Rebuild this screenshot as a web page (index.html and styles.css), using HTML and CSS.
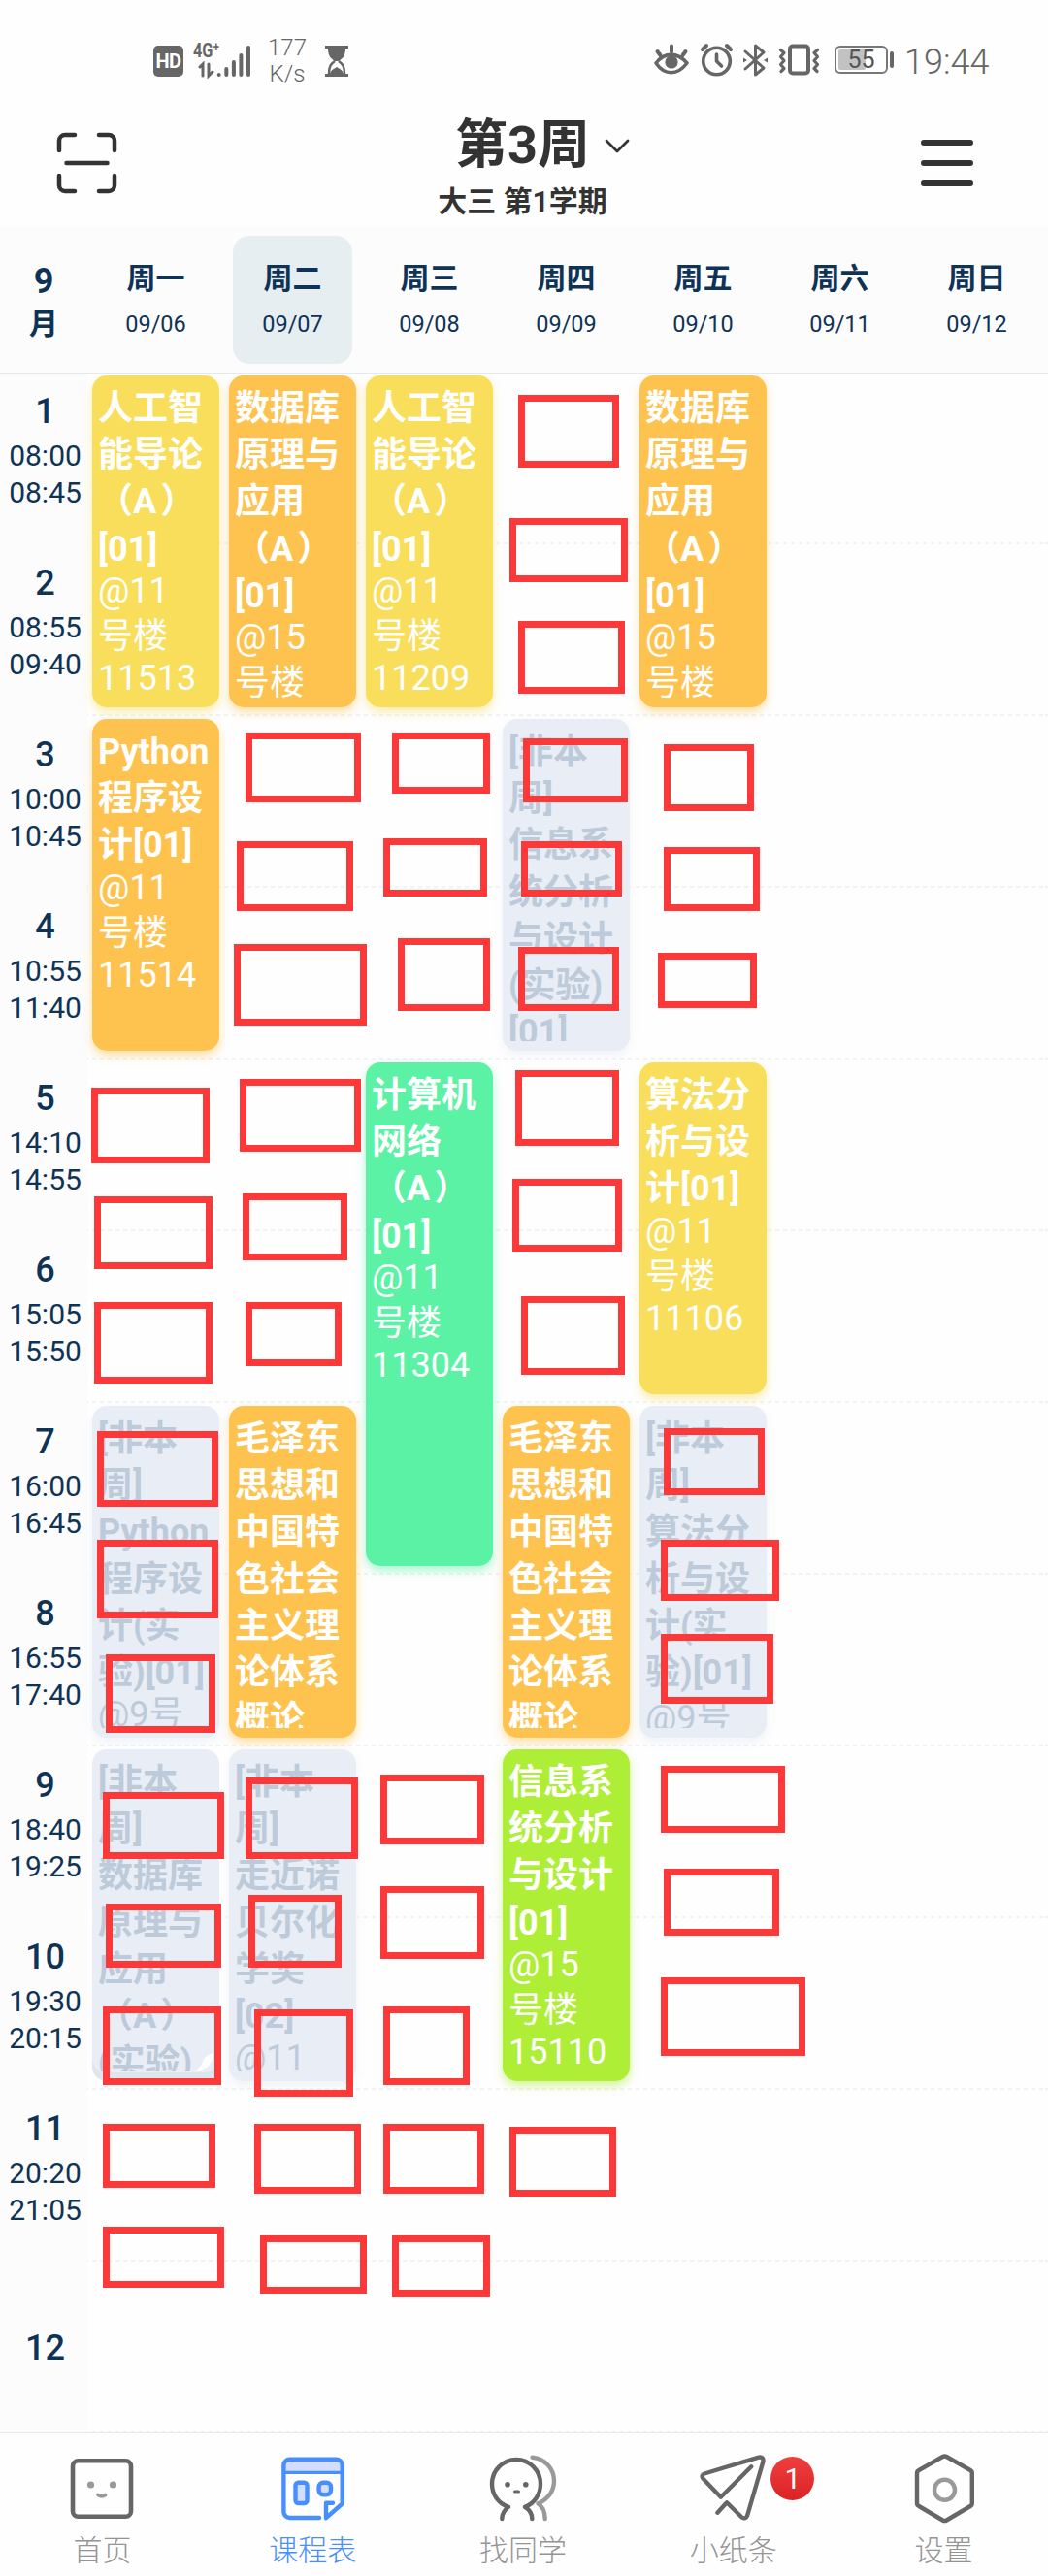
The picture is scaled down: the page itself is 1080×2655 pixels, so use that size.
FILE: index.html
```html
<!DOCTYPE html>
<html lang="zh-CN">
<head>
<meta charset="utf-8">
<title>课程表</title>
<link rel="stylesheet" href="styles.css">
</head>
<body>
<div class="status">
  <span class="hd">HD</span>
  <svg class="signal" width="62" height="40" viewBox="0 0 62 40">
    <text x="1" y="18" class="net" textLength="27" lengthAdjust="spacingAndGlyphs">4G⁺</text>
    <g stroke="#666" stroke-width="4" stroke-linecap="round" fill="none">
      <path d="M27.7 36v0M35.3 30v6M42.9 23v13M50.4 16v20M58 8v28"/>
      <path stroke-width="3" d="M8 28l3-3v12M17 25v12l4-4"/>
    </g>
  </svg>
  <span class="rate">177<br>K/s</span>
  <svg class="glass" width="26" height="34" viewBox="0 0 26 34">
    <g fill="#666"><path d="M1 1h24v3H1zM1 30h24v3H1zM4 4h18c0 8-3 10-7 13h-4C7 14 4 12 4 4z"/><path d="M6 30c1-4 4-5 7-7 3 2 6 3 7 7z"/></g>
    <path d="M11 17c-4 3-6 5-6 13M15 17c4 3 6 5 6 13" fill="none" stroke="#666" stroke-width="2.4"/>
  </svg>
  <svg class="sys" width="173" height="36" viewBox="0 0 173 36">
    <g fill="none" stroke="#666" stroke-width="4" stroke-linecap="round" stroke-linejoin="round">
      <path d="M2 21C11 9.500 24 9.500 34 21 24 34 11 34 2 21z" stroke-width="3.600"/>
      <path d="M3.500 9l3 4M18 3.500v6M32.500 9l-3 4"/>
      <circle cx="64.500" cy="19" r="13.800" stroke-width="3.600"/>
      <path d="M64.500 12v7l5 5" stroke-width="3.600"/>
      <path d="M50 7l4-4M79 7l-4-4"/>
      <path d="M94 9l19 17-8.500 7V3l8.500 7-19 17" stroke-width="3"/>
      <rect x="140" y="3.500" width="19" height="28" rx="3" stroke-width="4"/>
      <path d="M130.500 7.500l3.500 3-3.500 4 3.500 4-3.500 4 3.500 4-3 3M168.500 7.500l-3.500 3 3.500 4-3.500 4 3.500 4-3.500 4 3 3" stroke-width="3.200"/>
    </g>
    <path d="M92 15.500l4 2.500-4 2.500zM117 15.500l-4 2.500 4 2.500z" fill="#666"/>
    <circle cx="18" cy="20" r="6.600" fill="#666"/>
  </svg>
  <span class="battery"><span class="charge"></span><b>55</b></span>
  <span class="nub"></span>
  <span class="clock">19:44</span>
</div>

<header class="top">
  <svg width="64" height="64" viewBox="0 0 64 64" fill="none" stroke="#333" stroke-width="4.500" stroke-linecap="round">
    <path d="M3 19V9a6 6 0 0 1 6-6h10M44 3h10a6 6 0 0 1 6 6v10M3 45v10a6 6 0 0 0 6 6h10M44 61h10a6 6 0 0 0 6-6V45M10.500 32h42" />
  </svg>
  <div class="heading">
    <h1>第3周<svg class="chev" width="26" height="16" viewBox="0 0 26 16" fill="none" stroke="#333" stroke-width="2.800" stroke-linecap="round" stroke-linejoin="round"><path d="M2 2l11 11L24 2"/></svg></h1>
    <p>大三 第1学期</p>
  </div>
  <div class="menu"><i></i><i></i><i></i></div>
</header>

<div class="days">
  <div class="month">9<br><span>月</span></div>
  <div class="day">周一<small>09/06</small></div>
  <div class="day today">周二<small>09/07</small></div>
  <div class="day">周三<small>09/08</small></div>
  <div class="day">周四<small>09/09</small></div>
  <div class="day">周五<small>09/10</small></div>
  <div class="day">周六<small>09/11</small></div>
  <div class="day">周日<small>09/12</small></div>
</div>

<main class="schedule">
  <div class="times">
    <div><b>1</b>08:00<br>08:45</div>
    <div><b>2</b>08:55<br>09:40</div>
    <div><b>3</b>10:00<br>10:45</div>
    <div><b>4</b>10:55<br>11:40</div>
    <div><b>5</b>14:10<br>14:55</div>
    <div><b>6</b>15:05<br>15:50</div>
    <div><b>7</b>16:00<br>16:45</div>
    <div><b>8</b>16:55<br>17:40</div>
    <div><b>9</b>18:40<br>19:25</div>
    <div><b>10</b>19:30<br>20:15</div>
    <div><b>11</b>20:20<br>21:05</div>
    <div><b>12</b></div>
  </div>
  <div class="board">
    <article class="card yellow mon r1"><div class="clip"><h2>人工智<br>能导论<br>（<i>A</i>）<br>[01]</h2><p>@11<span>号楼</span>11513</p></div></article>
    <article class="card orange tue r1"><div class="clip"><h2>数据库<br>原理与<br>应用<br>（<i>A</i>）<br>[01]</h2><p>@15<span>号楼</span></p></div></article>
    <article class="card yellow wed r1"><div class="clip"><h2>人工智<br>能导论<br>（<i>A</i>）<br>[01]</h2><p>@11<span>号楼</span>11209</p></div></article>
    <article class="card orange fri r1"><div class="clip"><h2>数据库<br>原理与<br>应用<br>（<i>A</i>）<br>[01]</h2><p>@15<span>号楼</span></p></div></article>

    <article class="card orange mon r3"><div class="clip"><h2>Python<br>程序设<br>计[01]</h2><p>@11<span>号楼</span>11514</p></div></article>
    <article class="card off thu r3"><div class="clip"><h2>[非本<br>周]<br>信息系<br>统分析<br>与设计<br>(实验)<br>[01]</h2></div></article>

    <article class="card green wed r5 tall"><div class="clip"><h2>计算机<br>网络<br>（<i>A</i>）<br>[01]</h2><p>@11<span>号楼</span>11304</p></div></article>
    <article class="card yellow fri r5"><div class="clip"><h2>算法分<br>析与设<br>计[01]</h2><p>@11<span>号楼</span>11106</p></div></article>

    <article class="card off mon r7"><div class="clip"><h2>[非本<br>周]<br>Python<br>程序设<br>计(实<br>验)[01]</h2><p>@9号</p></div></article>
    <article class="card orange tue r7"><div class="clip"><h2>毛泽东<br>思想和<br>中国特<br>色社会<br>主义理<br>论体系<br>概论</h2></div></article>
    <article class="card orange thu r7"><div class="clip"><h2>毛泽东<br>思想和<br>中国特<br>色社会<br>主义理<br>论体系<br>概论</h2></div></article>
    <article class="card off fri r7"><div class="clip"><h2>[非本<br>周]<br>算法分<br>析与设<br>计(实<br>验)[01]</h2><p class="low">@9号</p></div></article>

    <article class="card off stack mon r9"><div class="clip"><h2>[非本<br>周]<br>数据库<br>原理与<br>应用<br>（<i>A</i>）<br>(实验)</h2></div><svg class="curl" width="20" height="20" viewBox="0 0 20 20"><path d="M0 19Q5 16 8 9 10 2 19 0 19 8 13 14 8 18 0 19z" fill="#fff"/></svg></article>
    <article class="card off tue r9"><div class="clip"><h2>[非本<br>周]<br>走近诺<br>贝尔化<br>学奖<br>[02]</h2><p>@11</p></div></article>
    <article class="card lime thu r9"><div class="clip"><h2>信息系<br>统分析<br>与设计<br>[01]</h2><p>@15<span>号楼</span>15110</p></div></article>
  </div>
</main>

<nav class="tabs">
  <a class="tab">
    <svg width="72" height="72" viewBox="0 0 72 72" fill="none" stroke="#666" stroke-width="4.600" stroke-linecap="round"><rect x="6" y="7.300" width="60" height="57.400" rx="5.500"/><path d="M32 42.500q3.800 2.800 7.600 0" stroke="#999" stroke-width="3.600"/><circle cx="24.500" cy="32" r="3.600" fill="#999" stroke="none"/><circle cx="47.500" cy="32" r="3.600" fill="#999" stroke="none"/></svg>
    <span>首页</span>
  </a>
  <a class="tab active">
    <svg width="72" height="72" viewBox="0 0 72 72" fill="none" stroke="#478ffc" stroke-width="4.400" stroke-linecap="round" stroke-linejoin="round"><path d="M6.400 19.300V12a6.300 6.300 0 0 1 6.300-6.300h47.700a6.300 6.300 0 0 1 6.300 6.300v7.300z" fill="#d2ddff" stroke="none"/><path d="M43 66H12.700a6.300 6.300 0 0 1-6.300-6.300V12a6.300 6.300 0 0 1 6.300-6.300h47.700a6.300 6.300 0 0 1 6.300 6.300v39.500L50 66.200V50.700h7"/><path d="M7 19.300h59" stroke-width="3.200"/><rect x="18.500" y="29.700" width="12" height="21.300" rx="3" fill="#d2ddff"/><rect x="42.600" y="29.700" width="12.400" height="12.600" rx="4.500" fill="#d2ddff"/></svg>
    <span>课程表</span>
  </a>
  <a class="tab">
    <svg width="72" height="72" viewBox="0 0 72 72" fill="none" stroke="#666" stroke-width="4.400" stroke-linecap="round" stroke-linejoin="round"><path d="M45.600 3.700C59 5 68 16 68 28c0 10-6 19-16.500 23.300 5 3 7.200 8 7.200 15.700" stroke="#999"/><path d="M14.300 67c0-5 2.500-9 6.700-12.200C10 51 4 41.500 4 31a25 25 0 0 1 50 0c0 10.500-6 20-16 23.800 5 3 7.300 7.200 7.300 12.200"/><path d="M27.500 39h4" stroke-width="3"/><circle cx="20" cy="31.700" r="2.800" fill="#666" stroke="none"/><circle cx="38.800" cy="31.700" r="2.800" fill="#666" stroke="none"/></svg>
    <span>找同学</span>
  </a>
  <a class="tab">
    <svg width="72" height="72" viewBox="0 0 72 72" fill="none" stroke="#666" stroke-width="4.400" stroke-linecap="round" stroke-linejoin="round"><path d="M54.200 13.300L22.800 44.700 4.600 25.800Q2 22 6 20.500L62 3.600Q67 3 66.400 8L50.200 63.500Q48.500 68 44.500 65.500L29 50.300 19.400 60.700"/></svg>
    <em>1</em>
    <span>小纸条</span>
  </a>
  <a class="tab">
    <svg width="72" height="72" viewBox="0 0 72 72" fill="none" stroke="#666" stroke-width="4.400" stroke-linejoin="round"><path d="M34.500 3q2-1.200 4 0L63 17q1.800 1 1.800 3v31q0 2-1.800 3L38.500 68.500q-2 1.200-4 0L10 54q-2-1-2-3V20q0-2 2-3z"/><circle cx="36.500" cy="37.300" r="10.500" stroke="#999"/></svg>
    <span>设置</span>
  </a>
</nav>

<svg class="marks" width="1080" height="2655" viewBox="0 0 1080 2655" fill="none" stroke="#fc3838" stroke-width="7">
  <rect x="537.500" y="410.500" width="97" height="68"/><rect x="528.500" y="537.500" width="115" height="59"/><rect x="537.500" y="643.500" width="103" height="68"/>
  <rect x="256.500" y="758.500" width="112" height="65"/><rect x="407.500" y="758.500" width="94" height="56"/><rect x="542.500" y="764.500" width="101" height="59"/><rect x="687.500" y="770.500" width="86" height="62"/>
  <rect x="247.500" y="870.500" width="113" height="65"/><rect x="398.500" y="867.500" width="100" height="53"/><rect x="540.500" y="870.500" width="97" height="50"/><rect x="687.500" y="876.500" width="92" height="59"/>
  <rect x="244.500" y="976.500" width="130" height="77"/><rect x="413.500" y="970.500" width="88" height="68"/><rect x="537.500" y="979.500" width="97" height="59"/><rect x="681.500" y="985.500" width="95" height="50"/>
  <rect x="97.500" y="1124.500" width="115" height="71"/><rect x="250.500" y="1115.500" width="118" height="68"/><rect x="534.500" y="1106.500" width="100" height="71"/>
  <rect x="100.500" y="1236.500" width="115" height="68"/><rect x="253.500" y="1233.500" width="101" height="62"/><rect x="531.500" y="1218.500" width="106" height="68"/>
  <rect x="100.500" y="1345.500" width="115" height="77"/><rect x="256.500" y="1345.500" width="92" height="59"/><rect x="540.500" y="1339.500" width="100" height="74"/>
  <rect x="103.500" y="1478.500" width="118" height="71"/><rect x="687.500" y="1475.500" width="97" height="62"/>
  <rect x="103.500" y="1590.500" width="118" height="74"/><rect x="684.500" y="1590.500" width="115" height="56"/>
  <rect x="112.500" y="1708.500" width="106" height="74"/><rect x="684.500" y="1687.500" width="109" height="65"/>
  <rect x="109.500" y="1850.500" width="118" height="62"/><rect x="256.500" y="1835.500" width="109" height="77"/><rect x="395.500" y="1832.500" width="100" height="65"/><rect x="684.500" y="1823.500" width="121" height="62"/>
  <rect x="112.500" y="1965.500" width="112" height="59"/><rect x="259.500" y="1956.500" width="89" height="68"/><rect x="395.500" y="1947.500" width="100" height="68"/><rect x="687.500" y="1929.500" width="112" height="62"/>
  <rect x="109.500" y="2071.500" width="115" height="74"/><rect x="265.500" y="2074.500" width="95" height="83"/><rect x="398.500" y="2071.500" width="82" height="74"/><rect x="684.500" y="2041.500" width="142" height="74"/>
  <rect x="109.500" y="2192.500" width="109" height="59"/><rect x="265.500" y="2192.500" width="103" height="65"/><rect x="398.500" y="2192.500" width="97" height="65"/><rect x="528.500" y="2195.500" width="103" height="65"/>
  <rect x="109.500" y="2298.500" width="118" height="56"/><rect x="271.500" y="2307.500" width="103" height="53"/><rect x="407.500" y="2307.500" width="94" height="56"/>
</svg>
</body>
</html>
```
FILE: styles.css
```css
* { box-sizing: border-box; margin: 0; padding: 0; }
body {
  position: relative;
  width: 1080px;
  height: 2655px;
  overflow: hidden;
  background: #fefefe;
  color: #0f3355;
  font-family: Roboto, "Noto Sans CJK SC", sans-serif;
  display: flex;
  flex-direction: column;
}

/* status bar */
.status { height: 96px; flex: none; padding: 0 0 0 158px; display: flex; align-items: flex-start; color: #666; }
.hd { width: 31px; height: 32px; margin-top: 47px; border-radius: 5px; background: #666; color: #fff; font: 700 20px/32px Roboto, sans-serif; text-align: center; letter-spacing: -.5px; }
.signal { margin: 41px 0 0 9px; }
.net { font: 700 21px Roboto, sans-serif; fill: #666; }
.rate { width: 44px; margin: 36px 0 0 14px; font-size: 24px; line-height: 27px; font-weight: 300; text-align: center; }
.glass { margin: 46px 0 0 16px; }
.sys { margin: 44px 0 0 314px; }
.battery { position: relative; width: 55px; height: 29px; margin: 47px 0 0 13px; border: 2px solid #777; border-radius: 6px; padding: 2px; display: flex; }
.charge { width: 28px; background: #c2c2c2; border-radius: 2px; }
.battery b { position: absolute; inset: 0; text-align: center; font: 400 25px/26px Roboto, sans-serif; color: #555; }
.nub { width: 4px; height: 17px; margin: 53px 0 0 2px; border-radius: 2px; background: #666; }
.clock { margin: 43px 0 0 11px; font-size: 36px; line-height: 42px; font-weight: 300; }

/* title bar */
.top { height: 138px; flex: none; padding: 0 77px 0 58px; display: flex; justify-content: space-between; color: #333; }
.top > svg { margin-top: 40px; }
.heading { margin-left: 6px; text-align: center; }
.top h1 { position: relative; width: max-content; margin: 22px auto 0; font-size: 54px; line-height: 64px; font-weight: 700; }
.chev { position: absolute; left: calc(100% + 15px); top: 25px; }
.top p { margin-top: 7px; font-size: 30px; line-height: 38px; font-weight: 700; }
.menu { width: 54px; padding-top: 48px; display: flex; flex-direction: column; gap: 15px; }
.menu i { height: 6px; border-radius: 3px; background: #333; }

/* weekday row */
.days { position: relative; height: 150px; flex: none; display: grid; grid-template-columns: 90px repeat(7, 141px); background: #fcfcfd; box-shadow: 0 1px #e4e9ec; z-index: 1; }
.month { padding-top: 35px; text-align: center; font-size: 36px; line-height: 42px; font-weight: 700; }
.month span { font-size: 30px; }
.day { margin: 9px; border-radius: 17px; text-align: center; font-size: 30px; line-height: 40px; font-weight: 700; padding-top: 24px; }
.day small { display: block; margin-top: 12px; font-size: 23.500px; line-height: 30px; font-weight: 400; }
.today { background: #e6eef1; }

/* timetable */
.schedule { height: 2123px; flex: none; display: flex; overflow: hidden; }
.times { width: 90px; height: 2124px; flex: none; background: #fcfcfd; }
.times div { height: 177px; padding: 0 0 0 3px; display: flow-root; text-align: center; font-size: 30px; line-height: 38px; }
.times b { display: block; margin: 18px 0 5px; font-size: 36px; line-height: 44px; font-weight: 500; }
.times div:last-child b { margin-top: 67px; }
.board {
  width: 990px;
  height: 2124px;
  display: grid;
  grid-template: repeat(12, 177px) / repeat(7, 141px);
  background:
    linear-gradient(#fefefe 175px, transparent 175px) 0 0 / 100% 177px,
    repeating-linear-gradient(90deg, #f1f2f3 0 4px, #fefefe 4px 8px) -3px 0;
}
.card { margin: 3px 5px 9px; padding: 10px 6px 10px; border-radius: 15px; color: #fff; min-width: 0; min-height: 0; position: relative; }
.clip { height: 100%; overflow: hidden; white-space: nowrap; }
.card h2 { font-size: 36px; line-height: 48.200px; font-weight: 700; }
.card h2 i { font-style: normal; padding-right: 4px; }
.card p { margin-top: -2px; font-size: 36px; line-height: 42px; }
.card p span { display: block; padding-top: 4px; line-height: 44px; }
.card p.low { margin-top: 2px; }
.yellow { background: #f9de5b; box-shadow: 0 5px 10px #f9de5b80; }
.orange { background: #fec34f; box-shadow: 0 5px 10px #fec34f80; }
.green { background: #5cf2a5; box-shadow: 0 5px 10px #5cf2a580; }
.lime { background: #aeee37; box-shadow: 0 5px 10px #aeee3780; }
.off { background: #e9edf5; color: #bccad9; box-shadow: 0 5px 10px #e9edf5a0; }
.stack { box-shadow: inset 0 -9px #dfe5ed; background: #e9edf5; }
.curl { position: absolute; right: 5px; bottom: 9px; }
.mon { grid-column: 1; }
.tue { grid-column: 2; }
.wed { grid-column: 3; }
.thu { grid-column: 4; }
.fri { grid-column: 5; }
.r1 { grid-row: 1 / 3; }
.r3 { grid-row: 3 / 5; }
.r5 { grid-row: 5 / 7; }
.r7 { grid-row: 7 / 9; }
.r9 { grid-row: 9 / 11; }
.tall { grid-row: 5 / 8; }

/* bottom tabs */
.tabs { flex: 1; margin: 0 -1px 0 -3px; padding-top: 21px; border-top: 1px solid #e9eaeb; display: grid; grid-template-columns: repeat(5, 1fr); }
.tab { position: relative; display: flex; flex-direction: column; align-items: center; gap: 10px; color: #959595; font-size: 30px; line-height: 36px; font-weight: 300; }
.active { color: #478ffc; }
.tab em { position: absolute; left: 147px; top: 3px; width: 45px; height: 45px; border-radius: 50%; background: linear-gradient(#ef3f3f, #dc2224); color: #fff; font: 400 30px/46px Roboto, sans-serif; text-align: center; }

/* free-form red markers drawn over the page */
.marks { position: absolute; left: 0; top: 0; }
```
